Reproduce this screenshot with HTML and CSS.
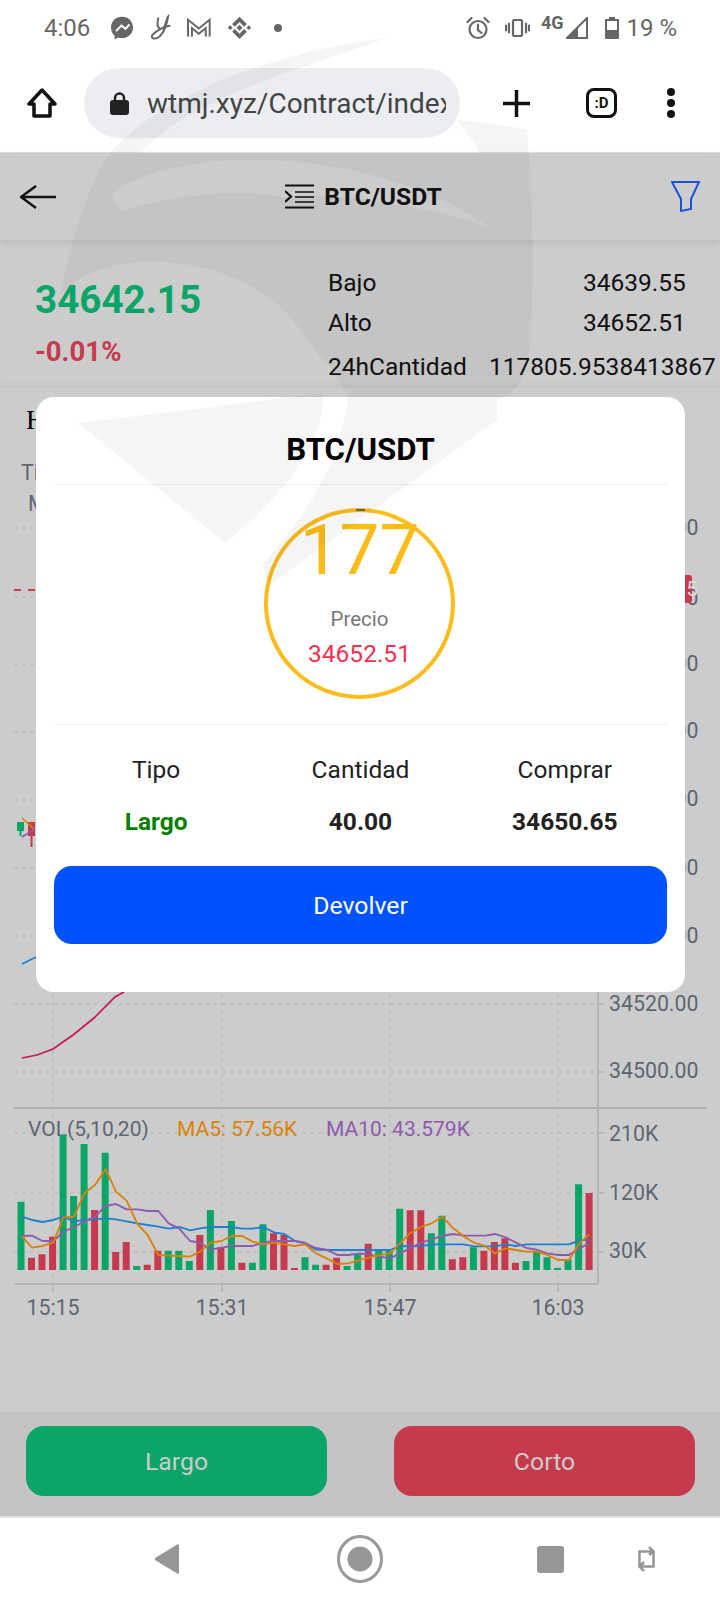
FILE: index.html
```html
<!DOCTYPE html>
<html lang="es">
<head>
    <meta charset="UTF-8">
    <meta name="viewport" content="width=device-width, initial-scale=1.0">
    <title>BTC/USDT</title>
    <link rel="stylesheet" href="styles.css">
</head>
<body>
<div class="page">

    <!-- phone status bar -->
    <div class="status-bar">
        <span class="status-time">4:06</span>
        <svg class="ic-messenger" viewBox="0 0 24 24">
            <path class="fill-grey" d="M12 .8C5.600 .8 1 5.400 1 11.500c0 3.300 1.300 6.100 3.600 8v4l3.500-2c1.200.4 2.500.6 3.900.6 6.400 0 11-4.600 11-10.600S18.400.8 12 .8z"/>
            <path class="zigzag" d="M6 15l5.500-5.500 4 3.300 4-4.500"/>
        </svg>
        <svg class="ic-script" viewBox="450 40 70 90">
            <path class="stroke-grey" d="M475 55C470 80 475 92 490 85 500 75 500 55 505 50 500 80 490 100 480 110 465 122 450 118 458 105 470 92 495 80 510 78"/>
        </svg>
        <svg class="ic-gmail" viewBox="555 48 85 64">
            <path class="gmail-out" d="M570 104V66l27 22 27-22v38"/>
            <path class="gmail-in" d="M570 104V66l27 22 27-22v38"/>
        </svg>
        <svg class="ic-binance" viewBox="678 46 74 72">
            <path class="fill-grey" d="M715 48l22 22-8 8-14-14-14 14-8-8zM715 115l-22-22 8-8 14 14 14-14 8 8zM680 81l7-7 7 7-7 7zM736 81l7-7 7 7-7 7zM715 72l9 9-9 9-9-9z"/>
        </svg>
        <span class="status-dot"></span>

        <div class="status-right">
            <svg class="ic-alarm" viewBox="0 0 24 24">
                <circle class="stroke-grey" cx="12" cy="13.500" r="8.500"/>
                <path class="stroke-grey" d="M12 8.500v5.500l3.500 3M1.500 6l4-4M22.500 6l-4-4"/>
            </svg>
            <svg class="ic-vibrate" viewBox="0 0 25 18">
                <rect class="stroke-grey" x="8" y="1" width="9" height="16" rx="1.500"/>
                <path class="stroke-grey" d="M4 4.500v9M1 6.500v5M21 4.500v9M24 6.500v5"/>
            </svg>
            <span class="status-net">4G</span>
            <svg class="ic-signal" viewBox="0 0 22 22">
                <path class="signal-line" d="M21 1v20H1z"/>
                <path class="fill-grey" d="M12 10v12H0z"/>
            </svg>
            <svg class="ic-battery" viewBox="0 0 14 22">
                <path class="fill-grey" d="M4 0h6v2h3a1 1 0 0 1 1 1v18a1 1 0 0 1-1 1H1a1 1 0 0 1-1-1V3a1 1 0 0 1 1-1h3zM2 4v9h10V4z"/>
            </svg>
            <span class="status-pct">19 %</span>
        </div>
    </div>

    <!-- browser toolbar -->
    <div class="toolbar">
        <svg class="ic-home" viewBox="0 0 30 30">
            <path d="M15 2L2 16h5v12h16V16h5z"/>
        </svg>
        <div class="url-pill">
            <svg class="ic-lock" viewBox="0 0 19 23">
                <path class="lock-arc" d="M5 10V6a4.500 4.500 0 0 1 9 0v4"/>
                <rect class="lock-body" x="0" y="8" width="19" height="15" rx="3"/>
            </svg>
            <span class="url-text">wtmj.xyz/Contract/index</span>
        </div>
        <svg class="ic-plus" viewBox="0 0 27 27">
            <path d="M13.500 0v27M0 13.500h27"/>
        </svg>
        <div class="tab-count">:D</div>
        <div class="dots"><span></span><span></span><span></span></div>
    </div>

    <!-- contract page -->
    <header class="top-header">
        <svg class="ic-back" viewBox="0 0 36 24">
            <path d="M36 12H1M16 1L1 12l15 11"/>
        </svg>
        <div class="pair">
            <svg class="ic-menu" viewBox="0 0 29 25">
                <path class="menu-edge" d="M0 1.500h29M0 23.500h29M0 7l6 5.500-6 5.500"/>
                <path class="menu-mid" d="M10 8h19M10 13h19M10 18h19"/>
            </svg>
            <span>BTC/USDT</span>
        </div>
        <svg class="ic-filter" viewBox="0 0 29 31">
            <path d="M1 1h27l-8 17v10l-10 2V18z"/>
        </svg>
    </header>

    <section class="stats">
        <div class="stats-left">
            <div class="price">34642.15</div>
            <div class="change">-0.01%</div>
        </div>
        <div class="stats-right">
            <div class="stat-row"><span class="stat-label">Bajo</span><span class="stat-value">34639.55</span></div>
            <div class="stat-row"><span class="stat-label">Alto</span><span class="stat-value">34652.51</span></div>
            <div class="stat-row stat-row-last"><span class="stat-label">24hCantidad</span><span>117805.9538413867</span></div>
        </div>
    </section>

    <svg class="chart" viewBox="0 388 720 1024" width="720" height="1024">
        <text class="chart-head" x="26" y="429">H</text>
        <text class="axis" x="21" y="480">Ti</text>
        <text class="axis" x="28" y="511">M</text>

        <path class="grid" d="M14 528H597M14 597H597M14 665H597M14 732H597M14 800H597M14 868H597M14 936H597M14 1004H597M14 1072H597M14 1133H597M14 1193H597M14 1252H597M53 490V1284M222 490V1284M390 490V1284M558 490V1284"/>
        <path class="axis-line" d="M598 490V1284M14 1284H598M53 1284v8M222 1284v8M390 1284v8M558 1284v8M598 528h6M598 597h6M598 665h6M598 732h6M598 800h6M598 868h6M598 936h6M598 1004h6M598 1072h6M598 1133h6M598 1193h6M598 1252h6"/>
        <path class="axis-split" d="M14 1108H707"/>

        <text class="axis" x="609" y="535">34660.00</text>
        <text class="axis" x="609" y="605">34640.00</text>
        <text class="axis" x="609" y="671">34620.00</text>
        <text class="axis" x="609" y="738">34600.00</text>
        <text class="axis" x="609" y="806">34580.00</text>
        <text class="axis" x="609" y="875">34560.00</text>
        <text class="axis" x="609" y="943">34540.00</text>
        <text class="axis" x="609" y="1011">34520.00</text>
        <text class="axis" x="609" y="1078">34500.00</text>

        <path class="price-line" d="M14 590H597"/>
        <rect class="price-tag" x="608" y="575" width="84" height="28" rx="3"/>
        <text class="price-tag-text" x="610" y="596">34642.15</text>

        <path class="candle-up" d="M17 822h7v9h-2.500v5h-2v-5h-2.500z"/>
        <path class="candle-down" d="M28 822h7v14h-2.500v11h-2v-11h-2.500z"/>
        <path class="ma-orange" d="M22 818l13 12"/>
        <path class="ma-purple" d="M22 837l13-8"/>
        <path class="ma-blue" d="M22 964l14-7"/>
        <path class="ma-pink" d="M22 1058l15-3 16-6 20-14 21-17 21-21 9-5"/>

        <text class="legend" x="28" y="1136">VOL(5,10,20)</text>
        <text class="legend legend-orange" x="177" y="1136">MA5: 57.56K</text>
        <text class="legend legend-purple" x="326" y="1136">MA10: 43.579K</text>
        <text class="axis" x="609" y="1141">210K</text>
        <text class="axis" x="609" y="1200">120K</text>
        <text class="axis" x="609" y="1258">30K</text>

        <path class="candle-up" d="M17.500 1270V1201.700h7V1270zM59.600 1270V1135h7V1270zM70.100 1270V1196h7V1270zM80.600 1270V1144h7V1270zM101.700 1270V1152.700h7V1270zM133.200 1270V1266h7V1270zM164.800 1270V1250.700h7V1270zM175.300 1270V1250.700h7V1270zM185.800 1270V1261h7V1270zM206.900 1270V1210h7V1270zM227.900 1270V1221h7V1270zM248.900 1270V1262.700h7V1270zM259.500 1270V1224.300h7V1270zM301.500 1270V1257.300h7V1270zM312.100 1270V1264.700h7V1270zM343.600 1270V1266h7V1270zM354.100 1270V1254.300h7V1270zM375.200 1270V1250.700h7V1270zM385.700 1270V1250.700h7V1270zM396.200 1270V1208.700h7V1270zM427.800 1270V1233.300h7V1270zM438.300 1270V1215.700h7V1270zM469.900 1270V1247.300h7V1270zM522.500 1270V1261h7V1270zM533 1270V1250.700h7V1270zM543.500 1270V1257.300h7V1270zM554 1270V1268h7V1270zM564.500 1270V1259.300h7V1270zM575.100 1270V1184.300h7V1270z"/>
        <path class="candle-down" d="M28 1270V1257.700h7V1270zM38.500 1270V1254.300h7V1270zM49.100 1270V1236.700h7V1270zM91.100 1270V1210h7V1270zM112.200 1270V1252h7V1270zM122.700 1270V1242h7V1270zM143.700 1270V1264.700h7V1270zM154.300 1270V1250.700h7V1270zM196.300 1270V1235h7V1270zM217.400 1270V1247.300h7V1270zM238.400 1270V1262.700h7V1270zM270 1270V1233.300h7V1270zM280.500 1270V1235h7V1270zM291 1270V1268h7V1270zM322.600 1270V1264.700h7V1270zM333.100 1270V1257.700h7V1270zM364.700 1270V1243.700h7V1270zM406.700 1270V1210.300h7V1270zM417.300 1270V1210.300h7V1270zM448.800 1270V1259.300h7V1270zM459.300 1270V1257.300h7V1270zM480.400 1270V1250.700h7V1270zM490.900 1270V1242h7V1270zM501.400 1270V1238.300h7V1270zM511.900 1270V1262.700h7V1270zM585.600 1270V1193h7V1270z"/>

        <g transform="translate(0 1100) scale(.3333)">
            <polyline class="ma-blue-v" points="65,350 96,360 128,366 160,360 190,350 222,364 253,360 285,358 317,355 348,358 380,364 412,370 443,375 475,380 506,386 538,381 570,391 600,385 632,381 664,381 695,381 727,386 758,386 790,381 822,397 853,402 885,423 915,428 948,449 980,450 1012,450 1045,450 1080,450 1110,450 1140,450 1170,450 1200,438 1230,439 1265,438 1295,433 1327,433 1360,433 1390,433 1422,439 1455,439 1485,439 1517,433 1548,438 1580,433 1610,433 1642,433 1675,433 1707,433 1738,422 1768,418"/>
            <polyline class="ma-purple-v" points="65,408 96,407 128,423 160,423 190,396 222,381 253,365 285,350 317,318 348,312 380,328 412,328 443,333 475,333 506,370 538,386 570,423 600,428 632,449 664,443 695,438 727,438 758,438 790,428 822,423 853,423 885,423 915,430 948,444 980,449 1012,465 1045,465 1080,460 1110,465 1140,470 1170,475 1200,460 1230,445 1265,428 1295,418 1327,408 1360,402 1390,407 1422,407 1455,407 1485,402 1517,412 1548,428 1580,444 1610,449 1642,460 1675,465 1707,465 1738,445 1768,430"/>
            <polyline class="ma-orange-v" points="65,408 96,443 128,438 160,428 190,352 222,350 253,280 285,255 317,207 348,275 380,302 412,372 443,405 475,465 506,467 538,468 570,470 600,455 632,428 664,423 695,408 727,408 758,425 790,433 822,428 853,433 885,438 915,433 948,460 980,475 1012,492 1045,490 1080,480 1110,472 1140,465 1170,460 1200,430 1230,400 1265,380 1295,370 1327,350 1360,385 1390,408 1422,428 1455,438 1485,460 1517,445 1548,450 1580,455 1610,455 1642,465 1675,480 1707,480 1738,430 1768,403"/>
        </g>

        <text class="axis time" x="53" y="1315">15:15</text>
        <text class="axis time" x="222" y="1315">15:31</text>
        <text class="axis time" x="390" y="1315">15:47</text>
        <text class="axis time" x="558" y="1315">16:03</text>
    </svg>

    <div class="actions">
        <button class="action-btn btn-long">Largo</button>
        <button class="action-btn btn-short">Corto</button>
    </div>

    <!-- android nav bar -->
    <nav class="nav-bar">
        <svg class="nav-back" viewBox="0 0 25 30">
            <path d="M25 1v28l-1 1L1 16v-2L24 0z"/>
        </svg>
        <svg class="nav-home" viewBox="0 0 46 48">
            <ellipse class="nav-ring" cx="23" cy="24" rx="21.500" ry="22.500"/>
            <circle class="nav-fill" cx="23" cy="24" r="12.500"/>
        </svg>
        <div class="nav-square"></div>
        <svg class="nav-rotate" viewBox="0 0 17 30">
            <path d="M1.500 22V7.500h13M11 3l4.500 4.500L11 11M15.500 8v14.500h-13M6 18l-4.500 4.500L6 27"/>
        </svg>
    </nav>

    <!-- order dialog -->
    <div class="modal">
        <h2 class="modal-title">BTC/USDT</h2>
        <div class="timer-wrap">
            <div class="timer">
                <div class="timer-count">177</div>
                <div class="timer-label">Precio</div>
                <div class="timer-price">34652.51</div>
            </div>
        </div>
        <div class="order-grid">
            <div>Tipo</div>
            <div>Cantidad</div>
            <div>Comprar</div>
            <div class="order-val order-long">Largo</div>
            <div class="order-val">40.00</div>
            <div class="order-val">34650.65</div>
        </div>
        <button class="return-btn">Devolver</button>
    </div>

    <!-- faint site logo laid over the whole screen -->
    <svg class="watermark" viewBox="0 0 720 1600" width="720" height="1600">
        <path fill-rule="evenodd" d="M390 37C300 48 170 85 110 153 85 190 72 240 60 295 80 275 105 265 138 262 215 258 275 290 300 330 320 360 345 380 348 400 335 480 300 520 262 565L270 585 497 420V400C510 395 522 385 527 367 536 300 533 200 527 130 510 126 485 122 457 120 470 135 475 145 480 153H140C190 100 280 75 390 37zM112 193C150 165 220 158 257 160 330 160 420 180 490 227 420 205 330 190 290 198 240 188 170 195 123 211 117 207 113 200 112 193z"/>
        <path d="M78 423L323 393C325 440 290 490 225 543z"/>
    </svg>
</div>
</body>
</html>
```

FILE: styles.css
```css
* {
    box-sizing: border-box;
}

body {
    margin: 0;
    padding: 0;
    font-family: Roboto, "Liberation Sans", sans-serif;
    background-color: #ccc;
}

.page {
    position: relative;
    width: 720px;
    height: 1600px;
    overflow: hidden;
    background-color: #ccc;
}

svg {
    display: block;
    flex: none;
}

.fill-grey {
    fill: #666;
}

.stroke-grey {
    fill: none;
    stroke: #666;
    stroke-width: 2.2;
    stroke-linecap: round;
}

/* status bar */
.status-bar {
    display: flex;
    align-items: center;
    height: 54px;
    padding: 2px 43px 0 44px;
    background-color: #fff;
    color: #666;
    font-size: 24px;
}

.status-time {
    width: 47px;
}

.ic-messenger {
    width: 24px;
    height: 24px;
    margin-left: 19px;
}

.zigzag {
    fill: none;
    stroke: #fff;
    stroke-width: 2;
}

.ic-script {
    width: 23px;
    height: 30px;
    margin-left: 16px;
}

.ic-script .stroke-grey {
    stroke-width: 6;
}

.ic-gmail {
    width: 28px;
    height: 21px;
    margin-left: 12px;
}

.gmail-out {
    fill: none;
    stroke: #666;
    stroke-width: 18;
}

.gmail-in {
    fill: none;
    stroke: #fff;
    stroke-width: 6;
}

.ic-binance {
    width: 25px;
    height: 24px;
    margin-left: 14px;
}

.status-dot {
    width: 8px;
    height: 8px;
    margin-left: 22px;
    border-radius: 50%;
    background-color: #666;
}

.status-right {
    display: flex;
    align-items: center;
    margin-left: auto;
}

.ic-alarm {
    width: 24px;
    height: 24px;
}

.ic-vibrate {
    width: 25px;
    height: 18px;
    margin-left: 15px;
}

.status-net {
    margin: 0 0 10px 11px;
    font-size: 18px;
    font-weight: 700;
    line-height: 16px;
}

.ic-signal {
    width: 22px;
    height: 22px;
    margin-left: 3px;
}

.signal-line {
    fill: none;
    stroke: #666;
    stroke-width: 2;
}

.ic-battery {
    width: 14px;
    height: 22px;
    margin-left: 17px;
}

.status-pct {
    margin-left: 7px;
}

/* browser toolbar */
.toolbar {
    display: flex;
    align-items: center;
    height: 99px;
    padding-left: 27px;
    background-color: #fff;
    border-bottom: 1px solid #e0e0e0;
}

.ic-home {
    width: 30px;
    height: 30px;
}

.ic-home path {
    fill: none;
    stroke: #111;
    stroke-width: 3.5;
    stroke-linejoin: round;
}

.url-pill {
    display: flex;
    align-items: center;
    width: 376px;
    height: 70px;
    margin-left: 27px;
    padding: 0 14px 0 26px;
    border-radius: 35px;
    background-color: #ebedf0;
}

.ic-lock {
    width: 19px;
    height: 23px;
}

.lock-arc {
    fill: none;
    stroke: #222;
    stroke-width: 2.5;
}

.lock-body {
    fill: #222;
}

.url-text {
    margin-left: 18px;
    overflow: hidden;
    white-space: nowrap;
    font-size: 28px;
    color: #444;
}

.ic-plus {
    width: 27px;
    height: 27px;
    margin-left: 43px;
}

.ic-plus path {
    stroke: #111;
    stroke-width: 3.5;
}

.tab-count {
    display: flex;
    align-items: center;
    justify-content: center;
    width: 31px;
    height: 30px;
    margin-left: 56px;
    border: 3.5px solid #111;
    border-radius: 8px;
    font-size: 15px;
    font-weight: 700;
    color: #111;
}

.dots {
    display: flex;
    flex-direction: column;
    gap: 3px;
    margin-left: 50px;
}

.dots span {
    width: 8px;
    height: 8px;
    border-radius: 50%;
    background-color: #111;
}

/* contract header */
.top-header {
    display: flex;
    align-items: center;
    justify-content: space-between;
    height: 87px;
    padding: 0 20px;
    box-shadow: 0 3px 8px rgba(0, 0, 0, 0.08);
}

.ic-back {
    width: 36px;
    height: 24px;
}

.ic-back path {
    fill: none;
    stroke: #111;
    stroke-width: 2.5;
}

.pair {
    display: flex;
    align-items: center;
    gap: 10px;
    font-size: 24.6px;
    font-weight: 700;
    color: #111;
}

.ic-menu {
    width: 29px;
    height: 25px;
}

.menu-edge {
    fill: none;
    stroke: #111;
    stroke-width: 2.2;
}

.menu-mid {
    fill: none;
    stroke: #111;
    stroke-width: 1.6;
}

.ic-filter {
    width: 29px;
    height: 31px;
}

.ic-filter path {
    fill: none;
    stroke: #1a53d9;
    stroke-width: 2;
}

/* price summary */
.stats {
    display: flex;
    height: 148px;
    color: #111;
    font-size: 24.5px;
    box-shadow: inset 0 -8px 8px -6px rgba(0, 0, 0, 0.05);
}

.stats-left {
    width: 328px;
    padding: 38px 0 0 35px;
}

.price {
    font-size: 38.6px;
    font-weight: 700;
    line-height: 44px;
    color: #0ba568;
}

.change {
    margin-top: 15px;
    font-size: 27.5px;
    font-weight: 700;
    line-height: 30px;
    color: #c53a4c;
}

.stats-right {
    padding-top: 23px;
    white-space: nowrap;
}

.stat-row {
    display: flex;
    line-height: 40px;
}

.stat-row-last {
    margin-top: 4px;
}

.stat-label {
    width: 161px;
}

.stat-value {
    margin-left: 94px;
}

/* chart */
.chart-head {
    font-family: "Liberation Serif", serif;
    font-size: 27px;
    fill: #000;
}

.axis {
    font-size: 21.3px;
    fill: #5e6673;
}

.legend {
    font-size: 21px;
    fill: #5e6673;
}

.legend-orange {
    fill: #da8308;
}

.legend-purple {
    fill: #8e5bad;
}

.time {
    text-anchor: middle;
}

.grid {
    fill: none;
    stroke: #bdbdbd;
    stroke-width: 1.5;
    stroke-dasharray: 4 4;
}

.axis-line {
    fill: none;
    stroke: #b5b5b5;
    stroke-width: 2;
}

.axis-split {
    fill: none;
    stroke: #b0b0b0;
    stroke-width: 2;
}

.price-line {
    fill: none;
    stroke: #d6384e;
    stroke-width: 2;
    stroke-dasharray: 7 7;
}

.price-tag {
    fill: #c53a4c;
}

.price-tag-text {
    font-size: 21px;
    fill: #ddd;
}

.candle-up {
    fill: #0ba568;
}

.candle-down {
    fill: #c53a4c;
}

.ma-orange,
.ma-purple,
.ma-blue,
.ma-pink {
    fill: none;
    stroke-width: 1.7;
}

.ma-orange {
    stroke: #d98108;
}

.ma-purple {
    stroke: #8e5bad;
}

.ma-blue {
    stroke: #1f80d0;
}

.ma-pink {
    stroke: #c2185b;
}

.ma-orange-v,
.ma-purple-v,
.ma-blue-v {
    fill: none;
    stroke-width: 5.5;
    stroke-linejoin: round;
}

.ma-orange-v {
    stroke: #d98108;
}

.ma-purple-v {
    stroke: #8e5bad;
}

.ma-blue-v {
    stroke: #1f80d0;
}

/* long / short buttons */
.actions {
    display: flex;
    justify-content: space-between;
    align-items: flex-start;
    height: 104px;
    padding: 14px 25px 0 26px;
    background-color: #c4c4c4;
}

.action-btn {
    width: 301px;
    height: 70px;
    border: none;
    border-radius: 18px;
    font-family: inherit;
    font-size: 24.8px;
    color: #ccc;
}

.btn-long {
    background-color: #0ba568;
}

.btn-short {
    background-color: #c53a4c;
}

/* android nav */
.nav-bar {
    display: flex;
    align-items: center;
    height: 84px;
    padding-left: 154px;
    background-color: #fff;
    border-top: 2px solid #e0e0e0;
}

.nav-back {
    width: 25px;
    height: 30px;
}

.nav-back path,
.nav-fill {
    fill: #969696;
}

.nav-home {
    width: 46px;
    height: 48px;
    margin-left: 158px;
}

.nav-ring {
    fill: none;
    stroke: #999;
    stroke-width: 3;
}

.nav-square {
    width: 27px;
    height: 27px;
    margin-left: 154px;
    border-radius: 3px;
    background-color: #969696;
}

.nav-rotate {
    width: 17px;
    height: 30px;
    margin-left: 74px;
}

.nav-rotate path {
    fill: none;
    stroke: #969696;
    stroke-width: 2.5;
}

/* dialog */
.modal {
    position: absolute;
    top: 397px;
    left: 36px;
    width: 649px;
    height: 595px;
    padding: 0 18px;
    border-radius: 18px;
    background-color: #fff;
}

.modal-title {
    margin: 0;
    padding: 33px 0 14px;
    border-bottom: 1px solid #f0f0f0;
    font-size: 31.2px;
    font-weight: 700;
    line-height: 40px;
    text-align: center;
    color: #000;
}

.timer-wrap {
    display: flex;
    justify-content: center;
    padding: 23px 2px 25px 0;
    border-bottom: 1px solid #f0f0f0;
}

.timer {
    position: relative;
    width: 191px;
    height: 191px;
    border: 4px solid #fbbc1c;
    border-radius: 50%;
    text-align: center;
}

.timer::before {
    content: "";
    position: absolute;
    top: -3px;
    left: 88px;
    width: 9px;
    height: 2px;
    background-color: #666;
}

.timer-count {
    margin-top: 3px;
    font-size: 71px;
    font-weight: 400;
    line-height: 70px;
    color: #fcbb16;
}

.timer-label {
    margin-top: 20px;
    font-size: 20.5px;
    line-height: 28px;
    color: #777;
}

.timer-price {
    margin-top: 6px;
    font-size: 24.5px;
    line-height: 30px;
    color: #f5304f;
}

.order-grid {
    display: grid;
    grid-template-columns: repeat(3, 1fr);
    row-gap: 18px;
    padding-top: 28px;
    font-size: 24.5px;
    line-height: 34px;
    text-align: center;
    color: #222;
}

.order-val {
    font-weight: 700;
}

.order-long {
    color: #008000;
}

.return-btn {
    display: block;
    width: 100%;
    height: 78px;
    margin-top: 27px;
    border: none;
    border-radius: 18px;
    background-color: #0052ff;
    font-family: inherit;
    font-size: 24.8px;
    color: #fff;
}

/* logo watermark */
.watermark {
    position: absolute;
    top: 0;
    left: 0;
    pointer-events: none;
    filter: blur(0.6px);
}

.watermark path {
    fill: rgba(0, 0, 0, 0.04);
}
```
